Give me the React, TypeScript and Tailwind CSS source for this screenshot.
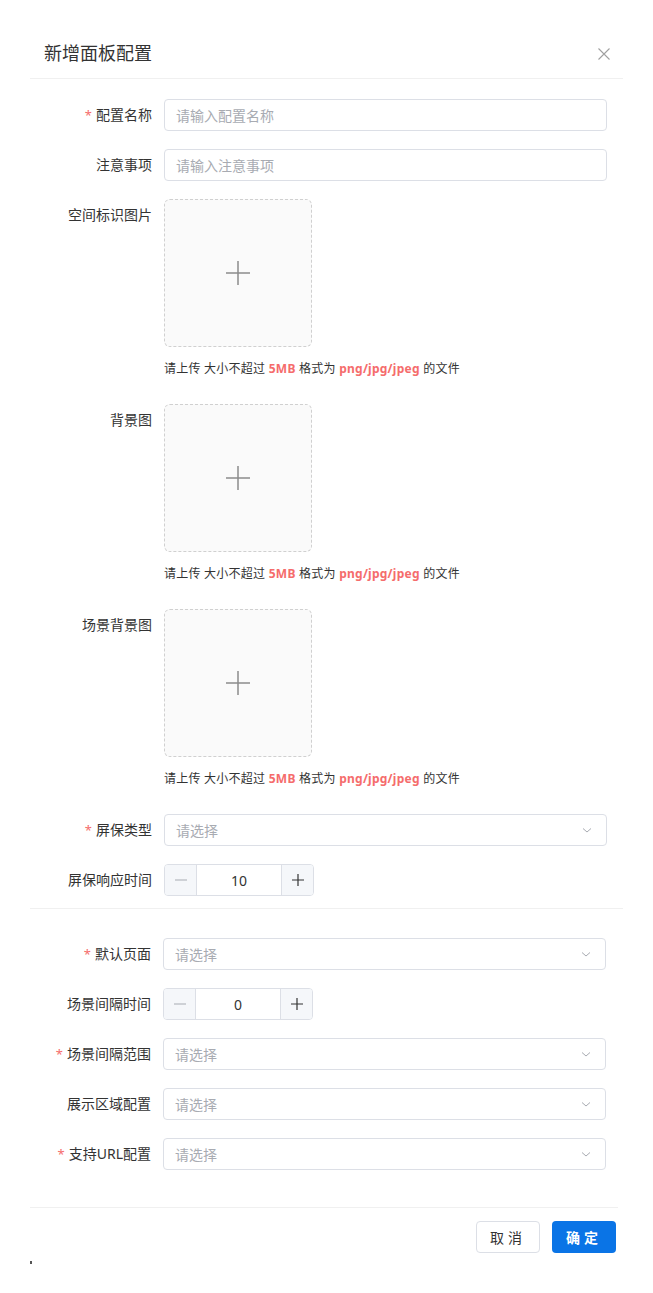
import React from "react";

const FONT = { fontFamily: '"Noto Sans", "Noto Sans CJK SC", sans-serif' };

function Label({ text, required }: { text: string; required?: boolean }) {
  return (
    <div className="w-[134px] shrink-0 pr-[12px] text-right text-[14px] leading-[32px] text-[#333]">
      {required && <span className="mr-[4px] text-[13px] text-[#f56c6c]">*</span>}
      {text}
    </div>
  );
}

function TextInput({ placeholder }: { placeholder: string }) {
  return (
    <div className="flex h-[32px] flex-1 items-center rounded-[4px] border border-[#dcdfe6] px-[11px] text-[14px] text-[#a8abb2]">
      {placeholder}
    </div>
  );
}

function Chevron() {
  return (
    <svg width="12" height="12" viewBox="0 0 12 12" fill="none">
      <path d="M2 4.5 L6 8 L10 4.5" stroke="#a8abb2" strokeWidth="1" />
    </svg>
  );
}

function Select() {
  return (
    <div className="flex h-[32px] flex-1 items-center justify-between rounded-[4px] border border-[#dcdfe6] pl-[11px] pr-[13px] text-[14px] text-[#a8abb2]">
      <span>请选择</span>
      <Chevron />
    </div>
  );
}

function NumberInput({ value }: { value: string }) {
  return (
    <div className="flex h-[32px] w-[150px] overflow-hidden rounded-[4px] border border-[#dcdfe6]">
      <div className="flex w-[32px] items-center justify-center border-r border-[#dcdfe6] bg-[#f5f7fa]">
        <svg width="14" height="14" viewBox="0 0 14 14">
          <path d="M1 7 H13" stroke="#a8abb2" strokeWidth="1.2" />
        </svg>
      </div>
      <div className="flex flex-1 items-center justify-center text-[14px] text-[#333]">{value}</div>
      <div className="flex w-[32px] items-center justify-center border-l border-[#dcdfe6] bg-[#f5f7fa]">
        <svg width="14" height="14" viewBox="0 0 14 14">
          <path d="M1 7 H13 M7 1 V13" stroke="#333" strokeWidth="1.2" />
        </svg>
      </div>
    </div>
  );
}

function Upload() {
  return (
    <div>
      <div className="flex h-[148px] w-[148px] items-center justify-center rounded-[6px] border border-dashed border-[#d0d0d0] bg-[#fafafa]">
        <svg width="26" height="26" viewBox="0 0 26 26">
          <path d="M1 13 H25 M13 1 V25" stroke="#8c8c8c" strokeWidth="1.5" />
        </svg>
      </div>
      <div className="h-[39px] pt-[12px] text-[12px] leading-[20px] tracking-[0.25px] text-[#333]">
        请上传 大小不超过 <span className="font-bold text-[#f56c6c]">5MB</span> 格式为{" "}
        <span className="font-bold text-[#f56c6c]">png/jpg/jpeg</span> 的文件
      </div>
    </div>
  );
}

function Row({ children, last }: { children: React.ReactNode; last?: boolean }) {
  return <div className={last ? "flex" : "mb-[18px] flex"}>{children}</div>;
}

export default function App() {
  return (
    <div className="relative min-h-[1293px] w-[653px] bg-white" style={FONT}>
      <div className="ml-[30px] w-[593px] pt-[29px]">
        <div className="flex h-[50px] items-center justify-between border-b border-[#f0f0f0] pl-[14px] pr-[13px]">
          <span className="text-[18px] text-[#333]">新增面板配置</span>
          <svg width="12" height="12" viewBox="0 0 12 12">
            <path d="M0.5 0.5 L11.5 11.5 M11.5 0.5 L0.5 11.5" stroke="#a0a0a0" strokeWidth="1.1" />
          </svg>
        </div>

        <div className="pr-[16px] pt-[20px]">
          <Row>
            <Label text="配置名称" required />
            <TextInput placeholder="请输入配置名称" />
          </Row>
          <Row>
            <Label text="注意事项" />
            <TextInput placeholder="请输入注意事项" />
          </Row>
          <Row>
            <Label text="空间标识图片" />
            <Upload />
          </Row>
          <Row>
            <Label text="背景图" />
            <Upload />
          </Row>
          <Row>
            <Label text="场景背景图" />
            <Upload />
          </Row>
          <Row>
            <Label text="屏保类型" required />
            <Select />
          </Row>
          <Row last>
            <Label text="屏保响应时间" />
            <NumberInput value="10" />
          </Row>
        </div>

        <div className="mt-[12px] border-t border-[#f0f0f0]" />

        <div className="-ml-px pr-[17px] pt-[29px]">
          <Row>
            <Label text="默认页面" required />
            <Select />
          </Row>
          <Row>
            <Label text="场景间隔时间" />
            <NumberInput value="0" />
          </Row>
          <Row>
            <Label text="场景间隔范围" required />
            <Select />
          </Row>
          <Row>
            <Label text="展示区域配置" />
            <Select />
          </Row>
          <Row last>
            <Label text="支持URL配置" required />
            <Select />
          </Row>
        </div>

        <div className="mt-[37px] mr-[5px] border-t border-[#f0f0f0]" />

        <div className="flex justify-end gap-[12px] pr-[7px] pt-[13px]">
          <button className="h-[32px] w-[64px] rounded-[4px] border border-[#dcdfe6] bg-white text-[14px] tracking-[4px] text-[#333]">
            取消
          </button>
          <button className="h-[32px] w-[64px] rounded-[4px] bg-[#0a74e6] text-[14px] font-bold tracking-[4px] text-white">
            确定
          </button>
        </div>
      </div>
      <div className="absolute left-[30px] top-[1261px] h-[3px] w-[2px] bg-[#555]" />
    </div>
  );
}
